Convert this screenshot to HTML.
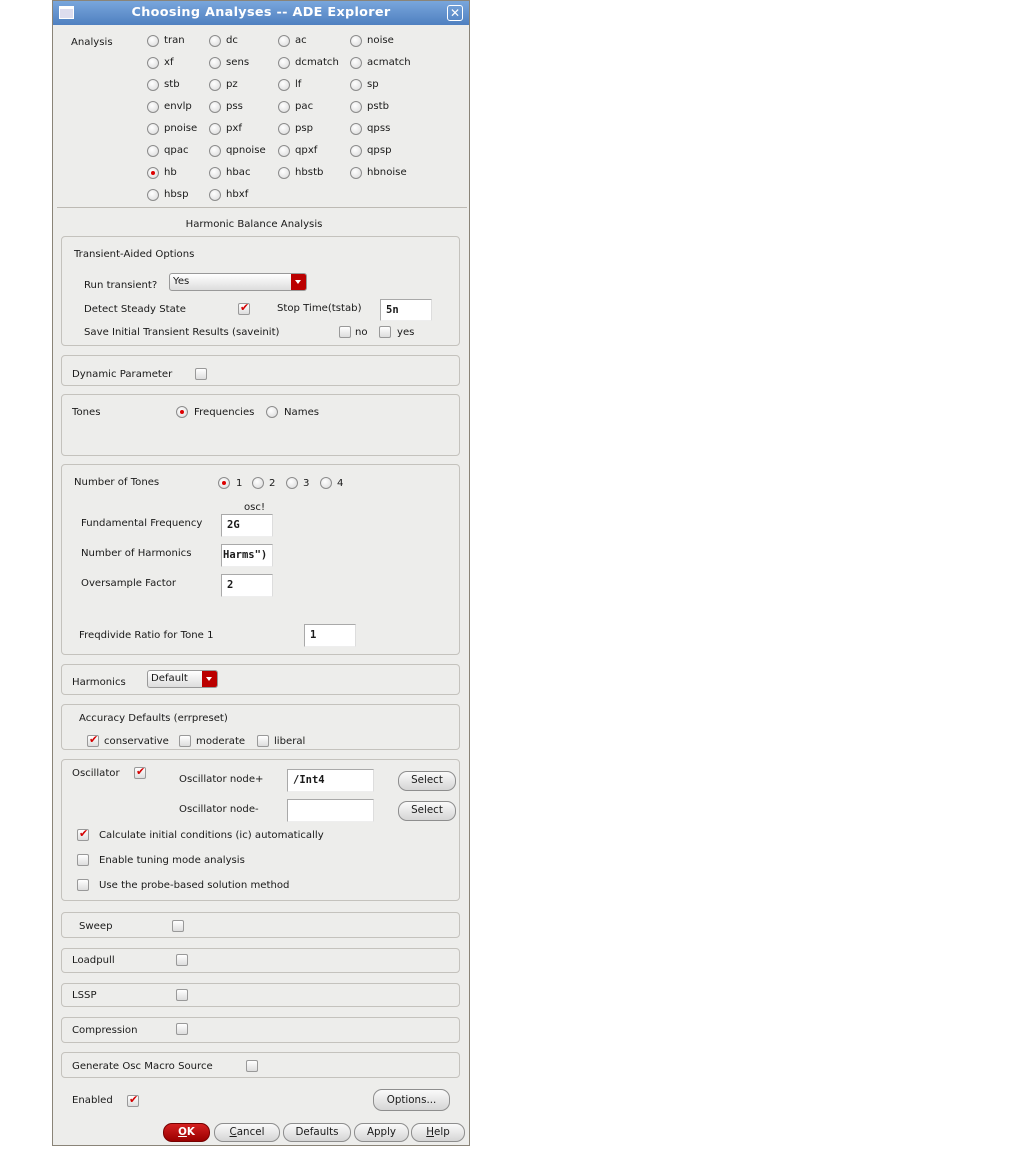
<!DOCTYPE html>
<html><head><meta charset="utf-8"><style>
*{margin:0;padding:0;box-sizing:border-box}
body{width:1013px;height:1151px;background:#fff;position:relative;overflow:hidden;font-family:"DejaVu Sans","Liberation Sans",sans-serif;font-size:10.1px;color:#1a1a1a}
#dlg{position:absolute;left:52px;top:0;width:418px;height:1146px;background:#ededeb;border:1px solid #8a8478}
#tb{position:absolute;left:0;top:0;width:416px;height:24px;background:linear-gradient(#79a6dc,#4f80c0);color:#fff;font-weight:bold;font-size:12.8px;text-align:center;line-height:24px;letter-spacing:0.3px}
.t{position:absolute;white-space:nowrap;line-height:14px}
.r{position:absolute;width:12px;height:12px;border-radius:50%;border:1px solid #8c8c8c;background:radial-gradient(circle at 40% 35%,#fff,#d8d8d8)}
.r.on::after{content:"";position:absolute;left:3px;top:3px;width:4px;height:4px;border-radius:50%;background:#d00}
.c{position:absolute;width:12px;height:12px;border:1px solid #999;border-radius:2px;background:linear-gradient(#fff,#ddd)}
.c.on::after{content:"✔";position:absolute;left:1px;top:-3px;color:#d40000;font-size:11px}
.g{position:absolute;left:8px;width:399px;border:1px solid #c4c2bd;border-radius:4px}
.in{position:absolute;background:#fff;border:1px solid #a9a9a9;border-bottom-color:#eee;border-right-color:#ddd;font-family:"DejaVu Sans Mono","Liberation Mono",monospace;font-size:10.5px;padding:4px 0 0 5px;font-weight:bold}
.b{position:absolute;border:1px solid #8e8e8e;border-radius:9px;background:linear-gradient(#fafafa,#d5d5d5);text-align:center;font-size:10.3px;line-height:17px}
.dd{position:absolute;border:1px solid #999;border-radius:3px;background:linear-gradient(#fff,#ddd);padding-left:3px;line-height:15px}
.dd i{position:absolute;right:0;top:0;width:15px;height:100%;background:#b00;border-radius:0 2px 2px 0}
.dd i::after{content:"";position:absolute;left:4px;top:6px;border:3.5px solid transparent;border-top:4px solid #fff}
</style></head><body>
<div id="dlg">
<div id="tb">Choosing Analyses -- ADE Explorer</div>
<div style="position:absolute;left:6px;top:5px;width:15px;height:13px;border:1px solid #fff;background:#dde;border-top:3px solid #fff"></div>
<div style="position:absolute;left:394px;top:4px;width:16px;height:16px;border:1px solid #fff;border-radius:3px;color:#fff;font-size:12px;line-height:14px;text-align:center">✕</div>

<div class="t" style="left:18px;top:35px">Analysis</div>
<div class="r" style="left:94px;top:34px"></div><div class="t" style="left:111px;top:33px">tran</div>
<div class="r" style="left:156px;top:34px"></div><div class="t" style="left:173px;top:33px">dc</div>
<div class="r" style="left:225px;top:34px"></div><div class="t" style="left:242px;top:33px">ac</div>
<div class="r" style="left:297px;top:34px"></div><div class="t" style="left:314px;top:33px">noise</div>

<div class="r" style="left:94px;top:56px"></div><div class="t" style="left:111px;top:55px">xf</div>
<div class="r" style="left:156px;top:56px"></div><div class="t" style="left:173px;top:55px">sens</div>
<div class="r" style="left:225px;top:56px"></div><div class="t" style="left:242px;top:55px">dcmatch</div>
<div class="r" style="left:297px;top:56px"></div><div class="t" style="left:314px;top:55px">acmatch</div>

<div class="r" style="left:94px;top:78px"></div><div class="t" style="left:111px;top:77px">stb</div>
<div class="r" style="left:156px;top:78px"></div><div class="t" style="left:173px;top:77px">pz</div>
<div class="r" style="left:225px;top:78px"></div><div class="t" style="left:242px;top:77px">lf</div>
<div class="r" style="left:297px;top:78px"></div><div class="t" style="left:314px;top:77px">sp</div>

<div class="r" style="left:94px;top:100px"></div><div class="t" style="left:111px;top:99px">envlp</div>
<div class="r" style="left:156px;top:100px"></div><div class="t" style="left:173px;top:99px">pss</div>
<div class="r" style="left:225px;top:100px"></div><div class="t" style="left:242px;top:99px">pac</div>
<div class="r" style="left:297px;top:100px"></div><div class="t" style="left:314px;top:99px">pstb</div>

<div class="r" style="left:94px;top:122px"></div><div class="t" style="left:111px;top:121px">pnoise</div>
<div class="r" style="left:156px;top:122px"></div><div class="t" style="left:173px;top:121px">pxf</div>
<div class="r" style="left:225px;top:122px"></div><div class="t" style="left:242px;top:121px">psp</div>
<div class="r" style="left:297px;top:122px"></div><div class="t" style="left:314px;top:121px">qpss</div>

<div class="r" style="left:94px;top:144px"></div><div class="t" style="left:111px;top:143px">qpac</div>
<div class="r" style="left:156px;top:144px"></div><div class="t" style="left:173px;top:143px">qpnoise</div>
<div class="r" style="left:225px;top:144px"></div><div class="t" style="left:242px;top:143px">qpxf</div>
<div class="r" style="left:297px;top:144px"></div><div class="t" style="left:314px;top:143px">qpsp</div>

<div class="r on" style="left:94px;top:166px"></div><div class="t" style="left:111px;top:165px">hb</div>
<div class="r" style="left:156px;top:166px"></div><div class="t" style="left:173px;top:165px">hbac</div>
<div class="r" style="left:225px;top:166px"></div><div class="t" style="left:242px;top:165px">hbstb</div>
<div class="r" style="left:297px;top:166px"></div><div class="t" style="left:314px;top:165px">hbnoise</div>

<div class="r" style="left:94px;top:188px"></div><div class="t" style="left:111px;top:187px">hbsp</div>
<div class="r" style="left:156px;top:188px"></div><div class="t" style="left:173px;top:187px">hbxf</div>

<div style="position:absolute;left:4px;top:206px;width:410px;border-top:1px solid #bdbab4"></div>
<div class="t" style="left:0;width:402px;text-align:center;top:217px">Harmonic Balance Analysis</div>

<div class="g" style="top:235px;height:110px"></div>
<div class="t" style="left:21px;top:247px">Transient-Aided Options</div>
<div class="t" style="left:31px;top:278px">Run transient?</div>
<div class="dd" style="left:116px;top:272px;width:138px;height:18px">Yes<i></i></div>
<div class="t" style="left:31px;top:302px">Detect Steady State</div>
<div class="c on" style="left:185px;top:302px"></div>
<div class="t" style="left:224px;top:301px">Stop Time(tstab)</div>
<div class="in" style="left:327px;top:298px;width:52px;height:22px">5n</div>
<div class="t" style="left:31px;top:325px">Save Initial Transient Results (saveinit)</div>
<div class="c" style="left:286px;top:325px"></div><div class="t" style="left:302px;top:325px">no</div>
<div class="c" style="left:326px;top:325px"></div><div class="t" style="left:344px;top:325px">yes</div>

<div class="g" style="top:354px;height:31px"></div>
<div class="t" style="left:19px;top:367px">Dynamic Parameter</div>
<div class="c" style="left:142px;top:367px"></div>

<div class="g" style="top:393px;height:62px"></div>
<div class="t" style="left:19px;top:405px">Tones</div>
<div class="r on" style="left:123px;top:405px"></div><div class="t" style="left:141px;top:405px">Frequencies</div>
<div class="r" style="left:213px;top:405px"></div><div class="t" style="left:231px;top:405px">Names</div>

<div class="g" style="top:463px;height:191px"></div>
<div class="t" style="left:21px;top:475px">Number of Tones</div>
<div class="r on" style="left:165px;top:476px"></div><div class="t" style="left:183px;top:476px">1</div>
<div class="r" style="left:199px;top:476px"></div><div class="t" style="left:216px;top:476px">2</div>
<div class="r" style="left:233px;top:476px"></div><div class="t" style="left:250px;top:476px">3</div>
<div class="r" style="left:267px;top:476px"></div><div class="t" style="left:284px;top:476px">4</div>
<div class="t" style="left:191px;top:500px">osc!</div>
<div class="t" style="left:28px;top:516px">Fundamental Frequency</div>
<div class="in" style="left:168px;top:513px;width:52px;height:23px">2G</div>
<div class="t" style="left:28px;top:546px">Number of Harmonics</div>
<div class="in" style="left:168px;top:543px;width:52px;height:23px;padding-left:1px">Harms")</div>
<div class="t" style="left:28px;top:576px">Oversample Factor</div>
<div class="in" style="left:168px;top:573px;width:52px;height:23px">2</div>
<div class="t" style="left:26px;top:628px">Freqdivide Ratio for Tone 1</div>
<div class="in" style="left:251px;top:623px;width:52px;height:23px">1</div>

<div class="g" style="top:663px;height:31px"></div>
<div class="t" style="left:19px;top:675px">Harmonics</div>
<div class="dd" style="left:94px;top:669px;width:71px;height:18px">Default<i></i></div>

<div class="g" style="top:703px;height:46px"></div>
<div class="t" style="left:26px;top:711px">Accuracy Defaults (errpreset)</div>
<div class="c on" style="left:34px;top:734px"></div><div class="t" style="left:51px;top:734px">conservative</div>
<div class="c" style="left:126px;top:734px"></div><div class="t" style="left:143px;top:734px">moderate</div>
<div class="c" style="left:204px;top:734px"></div><div class="t" style="left:221px;top:734px">liberal</div>

<div class="g" style="top:758px;height:142px"></div>
<div class="t" style="left:19px;top:766px">Oscillator</div>
<div class="c on" style="left:81px;top:766px"></div>
<div class="t" style="left:126px;top:772px">Oscillator node+</div>
<div class="in" style="left:234px;top:768px;width:87px;height:23px">/Int4</div>
<div class="b" style="left:345px;top:770px;width:58px;height:20px">Select</div>
<div class="t" style="left:126px;top:802px">Oscillator node-</div>
<div class="in" style="left:234px;top:798px;width:87px;height:23px"></div>
<div class="b" style="left:345px;top:800px;width:58px;height:20px">Select</div>
<div class="c on" style="left:24px;top:828px"></div><div class="t" style="left:46px;top:828px">Calculate initial conditions (ic) automatically</div>
<div class="c" style="left:24px;top:853px"></div><div class="t" style="left:46px;top:853px">Enable tuning mode analysis</div>
<div class="c" style="left:24px;top:878px"></div><div class="t" style="left:46px;top:878px">Use the probe-based solution method</div>

<div class="g" style="top:911px;height:26px"></div>
<div class="t" style="left:26px;top:919px">Sweep</div><div class="c" style="left:119px;top:919px"></div>
<div class="g" style="top:947px;height:25px"></div>
<div class="t" style="left:19px;top:953px">Loadpull</div><div class="c" style="left:123px;top:953px"></div>
<div class="g" style="top:982px;height:24px"></div>
<div class="t" style="left:19px;top:988px">LSSP</div><div class="c" style="left:123px;top:988px"></div>
<div class="g" style="top:1016px;height:26px"></div>
<div class="t" style="left:19px;top:1023px">Compression</div><div class="c" style="left:123px;top:1022px"></div>
<div class="g" style="top:1051px;height:26px"></div>
<div class="t" style="left:19px;top:1059px">Generate Osc Macro Source</div><div class="c" style="left:193px;top:1059px"></div>

<div class="t" style="left:19px;top:1093px">Enabled</div><div class="c on" style="left:74px;top:1094px"></div>
<div class="b" style="left:320px;top:1088px;width:77px;height:22px;line-height:20px">Options...</div>

<div class="b" style="left:110px;top:1122px;width:47px;height:19px;background:linear-gradient(#d42020,#9a0000);border-color:#700;color:#fff;font-weight:bold"><u>O</u>K</div>
<div class="b" style="left:161px;top:1122px;width:66px;height:19px"><u>C</u>ancel</div>
<div class="b" style="left:230px;top:1122px;width:68px;height:19px">Defaults</div>
<div class="b" style="left:301px;top:1122px;width:55px;height:19px">Apply</div>
<div class="b" style="left:358px;top:1122px;width:54px;height:19px"><u>H</u>elp</div>
</div>
</body></html>
